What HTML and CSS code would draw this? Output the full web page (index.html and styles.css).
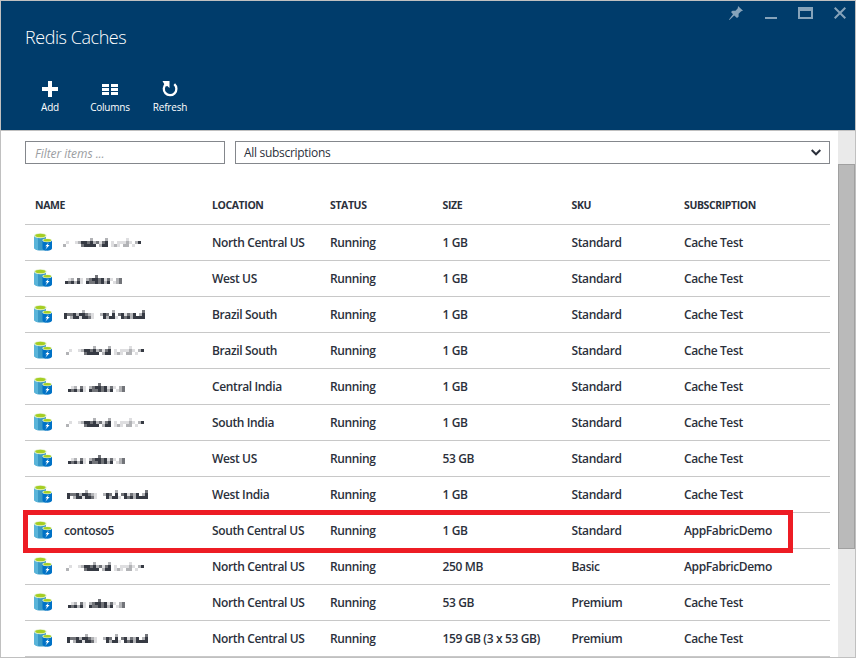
FILE: index.html
```
<!DOCTYPE html>
<html lang="en">
<head>
<meta charset="utf-8">
<title>Redis Caches</title>
<link rel="stylesheet" href="styles.css">
</head>
<body>
<svg class="defs" aria-hidden="true">
  <symbol id="cache" viewBox="0 0 18 18">
    <path d="M0 2.500v12C0 16 3 17.500 6 17.500h6v-15z" fill="#3999c6"/>
    <path d="M0 2.500v12C0 16 2 17 4 17.300V3z" fill="#59b4d9"/>
    <ellipse cx="6.400" cy="2.700" rx="6.400" ry="2.600" fill="#e8f3d2"/>
    <ellipse cx="6.400" cy="2.500" rx="5.200" ry="1.800" fill="#a5ce24"/>
    <path d="M8.500 7.500v8c0 1.200 2 2.200 4.700 2.200s4.800-1 4.800-2.200v-8z" fill="#0072c6"/>
    <ellipse cx="13.200" cy="7.300" rx="4.800" ry="1.900" fill="#e8f3d2"/>
    <ellipse cx="13.200" cy="7.200" rx="3.900" ry="1.300" fill="#a5ce24"/>
    <path d="M14.800 9.500l-3.500 3.700h1.800l-1.800 3.500 4.300-4.700h-2z" fill="#fff"/>
  </symbol>
  <symbol id="mask-a" viewBox="0 0 84 9">
    <path class="k1" d="M63 1.500h3M3 4.500h3M12 4.500h3M36 4.500h3M48 4.500h3M54 4.500h9M66 4.500h3M0 7.500h3M48 7.500h3M54 7.500h3M69 7.500h3"/>
    <path class="k2" d="M27 1.500h3M42 1.500h3M15 4.500h3M30 4.500h3M63 4.500h3M72 4.500h3M0 7.500h3M51 7.500h3M60 7.500h6M36 7.500h3"/>
    <path class="k3" d="M24 4.500h3M33 4.500h3M39 4.500h3M18 7.500h3"/>
    <path class="k4" d="M18 4.500h6M27 4.500h3M42 4.500h3M75 4.500h3M21 7.500h12M39 7.500h6"/>
  </symbol>
  <symbol id="mask-b" viewBox="0 0 84 9">
    <path class="k1" d="M3 4.500h3M15 4.500h3M39 4.500h3M45 4.500h3M15 7.500h3M48 7.500h3"/>
    <path class="k2" d="M6 4.500h3M21 4.500h3M51 4.500h3M9 7.500h3M51 7.500h3M39 7.500h3"/>
    <path class="k3" d="M30 1.500h3M12 4.500h3M24 4.500h3M33 4.500h3M42 4.500h3M54 4.500h3M3 7.500h3M24 7.500h6M33 7.500h3M54 7.500h3"/>
    <path class="k4" d="M27 4.500h6M36 4.500h3M0 7.500h3M6 7.500h3M12 7.500h3M21 7.500h3M30 7.500h3M36 7.500h3M42 7.500h3"/>
  </symbol>
  <symbol id="mask-c" viewBox="0 0 84 9">
    <path class="k1" d="M27 4.500h3M60 4.500h3M15 7.500h3M27 7.500h3M51 7.500h3"/>
    <path class="k2" d="M18 1.500h3M48 1.500h3M12 4.500h3M24 4.500h3M36 4.500h3M66 4.500h3M75 4.500h3M6 7.500h3M42 7.500h3M66 7.500h3"/>
    <path class="k3" d="M78 1.500h3M3 4.500h6M21 4.500h3M42 4.500h3M54 4.500h3M63 4.500h3M24 7.500h3M60 7.500h3"/>
    <path class="k4" d="M0 4.500h3M9 4.500h3M15 4.500h6M39 4.500h3M48 4.500h3M57 4.500h3M69 4.500h3M78 4.500h3M0 7.500h3M9 7.500h6M18 7.500h6M39 7.500h3M45 7.500h6M57 7.500h3M63 7.500h3M69 7.500h12"/>
  </symbol>
</svg>
<div class="blade">
  <header class="head">
    <div class="titlebar">
      <h1>Redis Caches</h1>
      <div class="controls">
        <svg width="14" height="15" viewBox="0 0 14 15"><path d="M9 0l5 4.800-1.800.5-2.600 2.500v2.900L8 12 5.200 9.500 0.500 14 0 13.500 4 8.300 2 6l1.500-1.300h3l2.300-2.500z"/></svg>
        <svg width="12" height="15" viewBox="0 0 12 15"><path d="M0 11h12v2H0z"/></svg>
        <svg width="15" height="15" viewBox="0 0 15 15"><path fill-rule="evenodd" d="M0 1h15v12H0zM2 5v6h11V5z"/></svg>
        <svg width="12" height="15" viewBox="0 0 12 15"><path class="cross" d="M.7 1.700l10.600 10.600M11.300 1.700L.7 12.300"/></svg>
      </div>
    </div>
    <nav class="tools">
      <div class="tool"><svg width="16" height="16" viewBox="0 0 16 16"><path d="M6 0h4v6h6v4h-6v6H6v-6H0V6h6z"/></svg><span>Add</span></div>
      <div class="tool"><svg width="16" height="16" viewBox="0 0 16 16"><path d="M0 3h7v3H0zM9 3h7v3H9zM0 7h7v3H0zM9 7h7v3H9zM0 11h7v3H0zM9 11h7v3H9z"/></svg><span>Columns</span></div>
      <div class="tool"><svg width="16" height="16" viewBox="0 0 16 16"><path class="ring" d="M12.300 3.200a6.300 6.300 0 1 1-8.200-.2"/><path d="M.5 0H7.500V7L5.300 4.900 3.600 5.500z"/></svg><span>Refresh</span></div>
    </nav>
  </header>
  <div class="body">
    <main class="content">
      <div class="filters">
        <div class="field filter">Filter items ...</div>
        <div class="field select"><span>All subscriptions</span><svg width="10" height="7" viewBox="0 0 10 7"><path d="M.7 1l4.300 4.300L9.300 1"/></svg></div>
      </div>
      <div class="grid">
        <div class="row labels"><span>NAME</span><span>LOCATION</span><span>STATUS</span><span>SIZE</span><span>SKU</span><span>SUBSCRIPTION</span></div>
        <div class="row"><div class="name"><svg class="ico"><use href="#cache"/></svg><svg class="mask a"><use href="#mask-a"/></svg></div><span>North Central US</span><span>Running</span><span>1 GB</span><span>Standard</span><span>Cache Test</span></div>
        <div class="row"><div class="name"><svg class="ico"><use href="#cache"/></svg><svg class="mask b"><use href="#mask-b"/></svg></div><span>West US</span><span>Running</span><span>1 GB</span><span>Standard</span><span>Cache Test</span></div>
        <div class="row"><div class="name"><svg class="ico"><use href="#cache"/></svg><svg class="mask c"><use href="#mask-c"/></svg></div><span>Brazil South</span><span>Running</span><span>1 GB</span><span>Standard</span><span>Cache Test</span></div>
        <div class="row shift"><div class="name"><svg class="ico"><use href="#cache"/></svg><svg class="mask a"><use href="#mask-a"/></svg></div><span>Brazil South</span><span>Running</span><span>1 GB</span><span>Standard</span><span>Cache Test</span></div>
        <div class="row shift"><div class="name"><svg class="ico"><use href="#cache"/></svg><svg class="mask b"><use href="#mask-b"/></svg></div><span>Central India</span><span>Running</span><span>1 GB</span><span>Standard</span><span>Cache Test</span></div>
        <div class="row shift"><div class="name"><svg class="ico"><use href="#cache"/></svg><svg class="mask a"><use href="#mask-a"/></svg></div><span>South India</span><span>Running</span><span>1 GB</span><span>Standard</span><span>Cache Test</span></div>
        <div class="row shift"><div class="name"><svg class="ico"><use href="#cache"/></svg><svg class="mask b"><use href="#mask-b"/></svg></div><span>West US</span><span>Running</span><span>53 GB</span><span>Standard</span><span>Cache Test</span></div>
        <div class="row shift"><div class="name"><svg class="ico"><use href="#cache"/></svg><svg class="mask c"><use href="#mask-c"/></svg></div><span>West India</span><span>Running</span><span>1 GB</span><span>Standard</span><span>Cache Test</span></div>
        <div class="row marked"><div class="name"><svg class="ico"><use href="#cache"/></svg><span>contoso5</span></div><span>South Central US</span><span>Running</span><span>1 GB</span><span>Standard</span><span>AppFabricDemo</span></div>
        <div class="row shift"><div class="name"><svg class="ico"><use href="#cache"/></svg><svg class="mask a"><use href="#mask-a"/></svg></div><span>North Central US</span><span>Running</span><span>250 MB</span><span>Basic</span><span>AppFabricDemo</span></div>
        <div class="row shift"><div class="name"><svg class="ico"><use href="#cache"/></svg><svg class="mask b"><use href="#mask-b"/></svg></div><span>North Central US</span><span>Running</span><span>53 GB</span><span>Premium</span><span>Cache Test</span></div>
        <div class="row shift"><div class="name"><svg class="ico"><use href="#cache"/></svg><svg class="mask c"><use href="#mask-c"/></svg></div><span>North Central US</span><span>Running</span><span>159 GB (3 x 53 GB)</span><span>Premium</span><span>Cache Test</span></div>
      </div>
    </main>
    <div class="scroll"><div class="thumb"></div></div>
  </div>
</div>
</body>
</html>
```
FILE: styles.css
```
*, *::after { box-sizing: border-box; }
body { margin: 0; font-family: "Open Sans", "Noto Sans", sans-serif; color: #2b303b; }
.defs { position: absolute; width: 0; height: 0; }
.blade { width: 856px; height: 658px; border: 1px solid #c0c0c0; display: flex; flex-direction: column; overflow: hidden; background: #fff; }
.head { height: 130px; flex: none; background: #003c6b; border-bottom: 1px solid #c0c0c0; color: #fff; }
.titlebar { height: 76px; display: flex; justify-content: space-between; padding-left: 24px; }
h1 { margin: 23px 0 0; font-size: 18px; line-height: 26px; font-weight: 300; letter-spacing: -0.45px; color: #fff; }
.controls { display: flex; padding: 5px 9px 0 0; fill: #86a3ba; }
.controls svg { margin-left: 21px; }
.controls svg:nth-child(2) { margin-left: 22px; }
.cross { stroke: #86a3ba; stroke-width: 2; fill: none; }
.tools { display: flex; padding-left: 19px; }
.tool { width: 60px; display: flex; flex-direction: column; align-items: center; padding-top: 4px; fill: #fff; font-size: 10px; line-height: 14px; letter-spacing: -0.2px; }
.tool span { margin-top: 3px; }
.ring { fill: none; stroke: #fff; stroke-width: 2.300; }
.body { flex: 1; display: flex; min-height: 0; }
.content { width: 837px; padding: 10px 8px 0 24px; overflow: hidden; }
.filters { display: flex; gap: 10px; }
.field { height: 23px; border: 1px solid #84878c; padding: 0 9px; font-size: 12px; line-height: 22px; letter-spacing: -0.3px; }
.filter { width: 200px; font-style: italic; color: #9b9da1; letter-spacing: -0.05px; line-height: 24px; }
.select { width: 595px; padding: 0 8px; display: flex; align-items: center; justify-content: space-between; }
.select path { fill: none; stroke: #2b303b; stroke-width: 2; }
.grid { margin-top: 20px; }
.row { width: 805px; height: 36px; display: grid; grid-template-columns: 177px 118px 112.500px 129px 112.500px 1fr; padding-left: 10px; border-bottom: 1px solid #c8c8c8; align-items: center; font-size: 12px; font-weight: 600; letter-spacing: -0.37px; white-space: nowrap; }
.labels { height: 41px; font-size: 10.500px; font-weight: 700; letter-spacing: -0.4px; padding-top: 1px; }
.name { display: flex; align-items: center; }
.ico { width: 18px; height: 18px; flex: none; margin: -1px 0 0 -1px; }
.name span { margin-left: 12px; }
.mask { width: 84px; height: 9px; flex: none; }
.mask.a { margin-left: 11px; }
.mask.b { margin-left: 13px; margin-top: 2px; }
.mask.c { margin-left: 12px; }
.shift .mask { position: relative; left: 3px; }
.k1, .k2, .k3, .k4 { fill: none; stroke-width: 3; }
.k1 { stroke: #dedee0; }
.k2 { stroke: #b2b3b6; }
.k3 { stroke: #727479; }
.k4 { stroke: #363a43; }
.marked { position: relative; }
.marked::after { content: ""; position: absolute; left: -2px; top: -3px; width: 770px; height: 43px; border: 5px solid #ed1c24; }
.scroll { flex: 1; background: #eaeaea; padding-top: 33px; }
.thumb { height: 385px; background: #bababa; border: 1px solid #a0a0a0; }
```
